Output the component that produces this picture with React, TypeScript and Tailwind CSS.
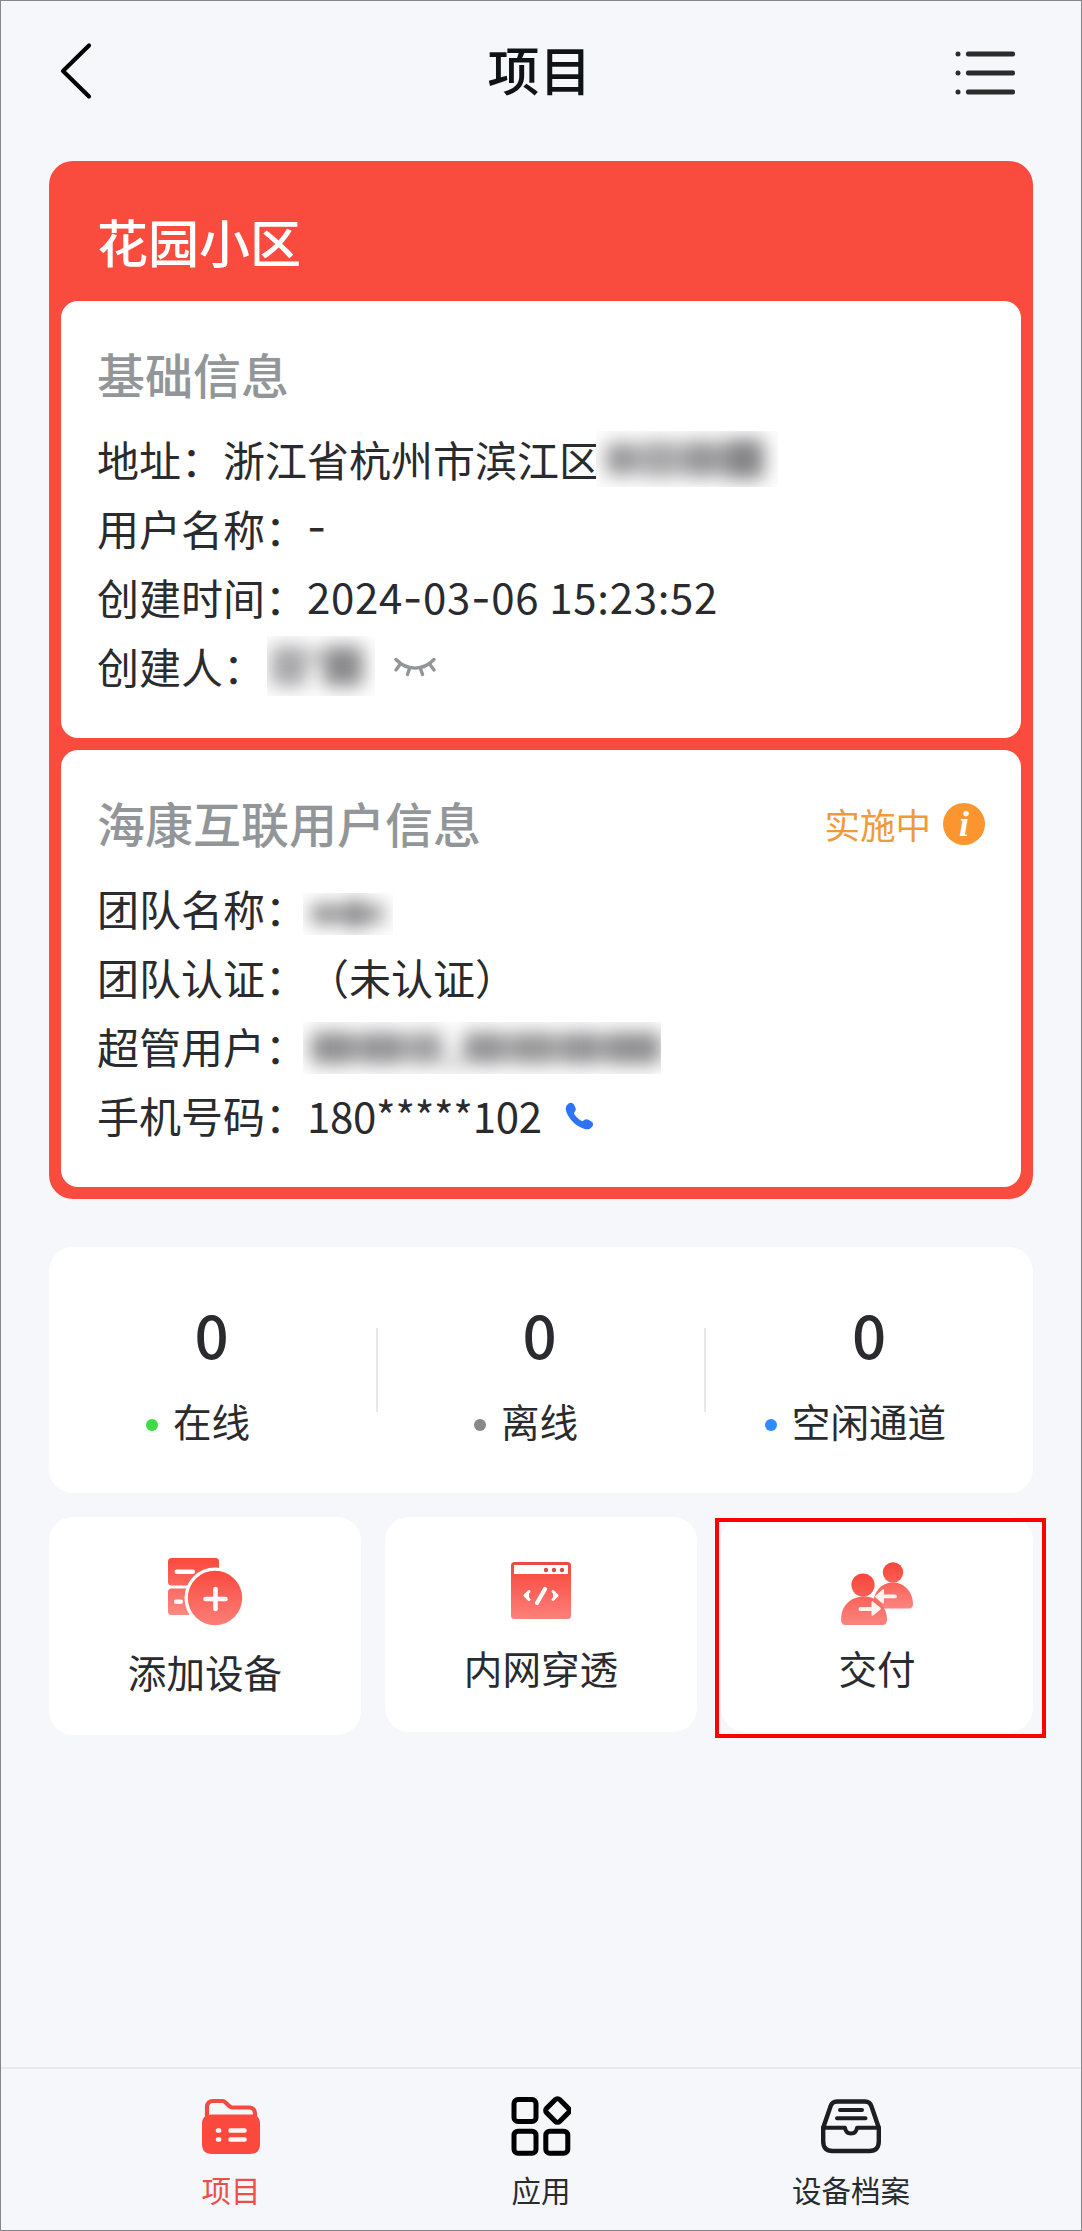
import type { ReactNode } from "react";
import clsx from "clsx";

type Stat = { label: string; value: number; dot: string };

const stats: Stat[] = [
  { label: "在线", value: 0, dot: "bg-[#3ddb45]" },
  { label: "离线", value: 0, dot: "bg-[#88888b]" },
  { label: "空闲通道", value: 0, dot: "bg-[#2d8cff]" },
];

function BackIcon() {
  return (
    <svg width="34" height="60" viewBox="0 0 34 60" fill="none">
      <path d="M30 4.500 4 30 30 55.500" stroke="#000" strokeWidth="4.200" strokeLinecap="round" strokeLinejoin="round" />
    </svg>
  );
}

function ListIcon() {
  return (
    <svg width="60" height="46" viewBox="0 0 60 46" fill="#2a2b2b">
      {[4, 23, 42].map((y) => (
        <g key={y}>
          <circle cx="3" cy={y} r="2.5" />
          <rect x="11" y={y - 2.4} width="49" height="4.8" rx="2" />
        </g>
      ))}
    </svg>
  );
}

function ClosedEyeIcon() {
  return (
    <svg width="42" height="20" viewBox="0 0 42 20" fill="none" stroke="#939699" strokeWidth="3.4" strokeLinecap="round">
      <path d="M2 2.500C13 14 29 14 40 2.500" />
      <path d="M6 7.500 2 13M15.500 11.500 13.500 17.500M26.500 11.500 28.500 17.500M36 7.500 40 13" />
    </svg>
  );
}

function PhoneIcon() {
  return (
    <svg width="30" height="28" viewBox="0 0 30 28" fill="#2f74f5">
      <path d="M3.500 1.600C5.600.1 7.800.7 9 2.800l1.300 2.500c.9 1.800.5 3.300-.7 4.700-.7.8-.6 1.600 0 2.500 1.800 2.800 3.900 4.700 6.700 6.200 1 .5 1.800.4 2.600-.4 1.300-1.300 2.900-1.500 4.600-.5l2.900 1.800c2 1.300 2.300 3.400.8 5.200-2 2.400-4.800 3.200-8.200 2C10.600 23.800 4.100 17.500 1.400 10 .1 6.300.7 3.600 3.500 1.600Z" />
    </svg>
  );
}

function AddDeviceIcon() {
  return (
    <svg width="76" height="68" viewBox="0 0 76 68">
      <defs>
        <linearGradient id="add-server" x1="0" y1="0" x2="0" y2="58" gradientUnits="userSpaceOnUse">
          <stop stopColor="#fa493e" />
          <stop offset="1" stopColor="#fb8a83" />
        </linearGradient>
        <linearGradient id="add-disc" x1="0" y1="12" x2="0" y2="68" gradientUnits="userSpaceOnUse">
          <stop stopColor="#fa493e" />
          <stop offset="1" stopColor="#fb8079" />
        </linearGradient>
      </defs>
      <rect x="1" y="0" width="51" height="27.500" rx="3.500" fill="url(#add-server)" />
      <rect x="1" y="30.500" width="51" height="26.500" rx="3.500" fill="url(#add-server)" />
      <rect x="7.500" y="11.500" width="20.500" height="4.400" rx="2.200" fill="#fff" />
      <rect x="7" y="41.500" width="9" height="4.400" rx="2.200" fill="#fff" />
      <circle cx="48" cy="40" r="30.500" fill="#fff" />
      <circle cx="48" cy="40" r="27.200" fill="url(#add-disc)" />
      <path d="M38.500 41h20M48.500 31v20" stroke="#fff" strokeWidth="4.600" strokeLinecap="round" />
    </svg>
  );
}

function IntranetIcon() {
  return (
    <svg width="60" height="58" viewBox="0 0 60 58">
      <defs>
        <linearGradient id="net-window" x1="0" y1="0" x2="0" y2="1">
          <stop stopColor="#e84b42" />
          <stop offset=".25" stopColor="#fa5248" />
          <stop offset="1" stopColor="#fb817a" />
        </linearGradient>
      </defs>
      <rect x="0" y="0" width="60" height="57" rx="3.500" fill="url(#net-window)" />
      <rect x="3" y="3" width="54" height="9" fill="#fff" />
      <circle cx="35" cy="8" r="2.200" fill="#dd4b44" />
      <circle cx="43" cy="8" r="2.200" fill="#dd4b44" />
      <circle cx="51" cy="8" r="2.200" fill="#dd4b44" />
      <path d="M26 41 34 27" stroke="#fff" strokeWidth="4.200" strokeLinecap="round" />
      <path d="m18 29.500-4 4 4 4M42 29.500l4 4-4 4" fill="#fff" stroke="#fff" strokeWidth="3" strokeLinecap="round" strokeLinejoin="round" />
    </svg>
  );
}

function HandoverIcon() {
  return (
    <svg width="74" height="64" viewBox="0 0 74 64">
      <defs>
        <linearGradient id="handover-head" x1="0" y1="0" x2="0" y2="1">
          <stop stopColor="#fa453a" />
          <stop offset="1" stopColor="#fa5f56" />
        </linearGradient>
        <linearGradient id="handover-body" x1="0" y1="0" x2="0" y2="1">
          <stop stopColor="#fa625a" />
          <stop offset="1" stopColor="#fb857f" />
        </linearGradient>
      </defs>
      <circle cx="53" cy="10.500" r="10.200" fill="url(#handover-head)" />
      <path d="M33 44C33 30 41 20.500 53 20.500S73 31 73 42c0 3-1.500 4.500-4.500 4.500H37c-3 0-4-1-4-2.500Z" fill="url(#handover-body)" />
      <circle cx="23" cy="23" r="11.600" fill="url(#handover-head)" />
      <path d="M1 57.500C1 44 10.500 34.500 24 34.500S47 45 47 57.500c0 3.500-1.500 5.500-5 5.500H6c-3.500 0-5-2-5-5.500Z" fill="url(#handover-body)" />
      <path d="M20.500 45h11v-4.500c0-1 .8-1.500 1.700-.8l7 5.800c.9.700.9 1.500 0 2.200l-7 5.800c-.9.700-1.700.2-1.700-.8V49h-11a2 2 0 0 1 0-4Z" fill="#fff5ef" />
      <path d="M55 36.300H44v4.200c0 1-.8 1.500-1.700.8l-6.500-5.700c-.9-.7-.9-1.500 0-2.200l6.500-5.700c.9-.7 1.700-.2 1.700.8v4H55a1.900 1.900 0 0 1 0 3.800Z" fill="#fff5ef" />
    </svg>
  );
}

function FolderIcon() {
  return (
    <svg width="60" height="60" viewBox="0 0 60 60" fill="none">
      <path d="M6 24V11c0-4 2.500-6 6-6h9.500c4 0 5.500 6.500 10 6.500H48c4 0 6 2.500 6 6V24" stroke="#f14b42" strokeWidth="4.200" />
      <path d="M11 18.500h38c7 0 10 3.500 10 9v20c0 7-3.500 10.500-10 10.500H11C4 58 1 54.500 1 47.500v-20c0-5.500 3.500-9 10-9Z" fill="#fb493e" />
      <path d="M29.500 34.500h14M29.500 43.500h14M17 34.500h1.200M17 43.500h1.200" stroke="#fff7f3" strokeWidth="4.600" strokeLinecap="round" />
    </svg>
  );
}

function AppsIcon() {
  return (
    <svg width="60" height="60" viewBox="0 0 60 60" fill="none" stroke="#000" strokeWidth="5">
      <rect x="3" y="3.500" width="22" height="22" rx="4" />
      <rect x="3" y="35.200" width="22" height="22" rx="4" />
      <rect x="34.800" y="35.200" width="22" height="22" rx="4" />
      <rect x="37.250" y="5.250" width="18.500" height="18.500" rx="3" transform="rotate(45 46.500 14.500)" />
    </svg>
  );
}

function ArchiveIcon() {
  return (
    <svg width="60" height="60" viewBox="0 0 60 60" fill="none" stroke="#1d1e1f" strokeWidth="4.400" strokeLinecap="round" strokeLinejoin="round">
      <path d="M2.200 31.800 9.500 10.500C10.500 7 13 5.500 16 5.500h28c3 0 5.500 1.500 6.500 5l7.300 21.300V45c0 7-3 10-9.500 10H11.700c-6.500 0-9.500-3-9.500-10V31.800Z" />
      <path d="M2.200 31.800H24c.5 3.700 2.500 5.700 6 5.700s5.500-2 6-5.700h21.800M19 14h22M16 22.300h28.500" strokeWidth="4" />
    </svg>
  );
}

// Redacted value, drawn as soft smudges
function Masked({ className, marks }: { className: string; marks: string[] }) {
  return (
    <span className={clsx("flex items-center overflow-hidden bg-[#fdfdfd]", className)}>
      <span className="flex items-center gap-0.5 blur-[9px]">
        {marks.map((mark, i) => (
          <span key={i} className={clsx("rounded-md", mark)} />
        ))}
      </span>
    </span>
  );
}

function Row({ label, children }: { label: string; children?: ReactNode }) {
  return (
    <div className="flex h-[69px] items-center leading-[69px] whitespace-nowrap">
      <span>{label}：</span>
      {children}
    </div>
  );
}

// Inter has the wide hyphen used between date parts
function Dash() {
  return <span className="font-['Inter',sans-serif]">-</span>;
}

function InfoPanel({ title, extra, children }: { title: string; extra?: ReactNode; children: ReactNode }) {
  return (
    <section className="h-[437px] rounded-[17px] bg-white px-9 pt-[42px]">
      <div className="flex h-[60px] items-center justify-between">
        <h3 className="text-[48px] leading-[60px] font-medium text-[#939699]">{title}</h3>
        {extra}
      </div>
      <div className="mt-[21px] text-[42px] text-[#292b2e]">{children}</div>
    </section>
  );
}

function NavItem({ icon, label, active }: { icon: ReactNode; label: string; active?: boolean }) {
  return (
    <div className="flex w-[310px] flex-col items-center pt-[27px]">
      {icon}
      <span className={clsx("mt-[13px] text-[29.5px] leading-10", active ? "text-[#ec4f47]" : "text-[#292b2e]")}>
        {label}
      </span>
    </div>
  );
}

export default function App() {
  return (
    <div className="flex h-[2231px] w-[1082px] flex-col border border-[#85868a] bg-[#f5f7fb] font-['Noto_Sans_CJK_SC',sans-serif]">
      <header className="flex h-[140px] items-center justify-between pr-[66px] pl-[58px]">
        <div className="w-[65px]">
          <BackIcon />
        </div>
        <h1 className="-mt-1 text-[52px] leading-[60px] font-medium text-[#101316]">项目</h1>
        <div className="mt-[3px]">
          <ListIcon />
        </div>
      </header>

      <main className="mx-12 mt-5 flex flex-col">
        <div className="rounded-[24px] bg-[#f94b3e] px-3 pt-[50px] pb-3">
          <h2 className="mb-[30px] pl-9 text-[51px] leading-[60px] font-medium text-white">花园小区</h2>
          <div className="flex flex-col gap-3">
            <InfoPanel title="基础信息">
              <Row label="地址">
                <span>浙江省杭州市滨江区</span>
                <Masked
                  className="-ml-[5px] h-14 w-[182px] pl-2.5"
                  marks={["h-8 w-8 bg-[#98989a]", "h-9 w-10 bg-[#a8a8aa]", "h-9 w-10 bg-[#98989a]", "h-10 w-10 bg-[#858587]"]}
                />
              </Row>
              <Row label="用户名称">
                <Dash />
              </Row>
              <Row label="创建时间">
                <span className="tracking-[0.7px]">
                  2024
                  <Dash />
                  03
                  <Dash />
                  06 15:23:52
                </span>
              </Row>
              <Row label="创建人">
                <Masked
                  className="ml-0.5 h-[60px] w-[108px] pl-1"
                  marks={["h-10 w-9 bg-[#a8a8aa]", "mb-5 h-3 w-3 bg-[#a5a5a7]", "h-10 w-10 bg-[#8a8a8c]"]}
                />
                <span className="mt-[3px] ml-[19px]">
                  <ClosedEyeIcon />
                </span>
              </Row>
            </InfoPanel>

            <InfoPanel
              title="海康互联用户信息"
              extra={
                <div className="mt-[3px] flex items-center gap-3 text-[35.5px] leading-[60px] text-[#f09a3c]">
                  实施中
                  <span className="flex size-[42px] items-center justify-center rounded-full bg-[#fb952f] font-['Liberation_Serif',serif] text-[36px] leading-none font-bold text-white italic">
                    i
                  </span>
                </div>
              }
            >
              <Row label="团队名称">
                <Masked
                  className="-ml-1 mt-3 h-[42px] w-[90px] pl-2"
                  marks={["h-5 w-8 bg-[#8f8f91]", "h-7 w-5 bg-[#7f7f81]", "h-5 w-4 bg-[#8f8f91]"]}
                />
              </Row>
              <Row label="团队认证">
                <span>（未认证）</span>
              </Row>
              <Row label="超管用户">
                <Masked
                  className="-ml-1 mt-1 h-[52px] w-[358px] pl-2"
                  marks={[
                    "h-8 w-11 bg-[#8f8f91]",
                    "h-8 w-12 bg-[#949496]",
                    "h-8 w-9 bg-[#a0a0a2]",
                    "mt-8 h-1.5 w-4 bg-[#a0a0a2]",
                    "h-8 w-11 bg-[#949496]",
                    "h-8 w-12 bg-[#989899]",
                    "h-8 w-11 bg-[#949496]",
                    "h-8 w-14 bg-[#8f8f91]",
                  ]}
                />
              </Row>
              <Row label="手机号码">
                <span className="tracking-[-0.3px]">180*****102</span>
                <span className="mt-[3px] ml-[23px]">
                  <PhoneIcon />
                </span>
              </Row>
            </InfoPanel>
          </div>
        </div>

        <div className="mt-12 flex h-[246px] items-center rounded-[24px] bg-white">
          {stats.map((s, i) => (
            <div key={s.label} className="flex h-full w-[328px] items-center">
              <div
                className={clsx(
                  "flex h-full flex-1 flex-col items-center pt-14 text-[#292b2e]",
                  i < stats.length - 1 && "pr-0.5"
                )}
              >
                <span className="text-[60px] leading-[60px] font-medium">{s.value}</span>
                <div className="mt-8 flex items-center gap-[15px] pr-[27px] text-[38.6px] leading-[50px]">
                  <i className={clsx("mt-2.5 size-3 rounded-full", s.dot)} />
                  {s.label}
                </div>
              </div>
              {i < stats.length - 1 && <div className="-mr-px h-[84px] w-0.5 bg-[#e6e7e9]" />}
            </div>
          ))}
        </div>

        <div className="mt-6 grid grid-cols-3 items-start gap-6 text-[38.6px] leading-[50px] text-[#292b2e]">
          <div className="flex h-[218px] flex-col items-center rounded-[24px] bg-white pt-[41px]">
            <AddDeviceIcon />
            <span className="mt-5">添加设备</span>
          </div>
          <div className="flex h-[215px] flex-col items-center rounded-[24px] bg-white pt-[45px]">
            <IntranetIcon />
            <span className="mt-[22px]">内网穿透</span>
          </div>
          <div className="relative flex h-[215px] flex-col items-center rounded-[24px] bg-white pt-[45px]">
            <HandoverIcon />
            <span className="mt-4">交付</span>
            <div className="absolute top-px -right-[13px] -bottom-[6px] -left-[6px] border-4 border-[#ff0000]" />
          </div>
        </div>
      </main>

      <nav className="mt-auto flex h-[163px] justify-center border-t-2 border-[#e7e9ed]">
        <NavItem icon={<FolderIcon />} label="项目" active />
        <NavItem icon={<AppsIcon />} label="应用" />
        <NavItem icon={<ArchiveIcon />} label="设备档案" />
      </nav>
    </div>
  );
}
